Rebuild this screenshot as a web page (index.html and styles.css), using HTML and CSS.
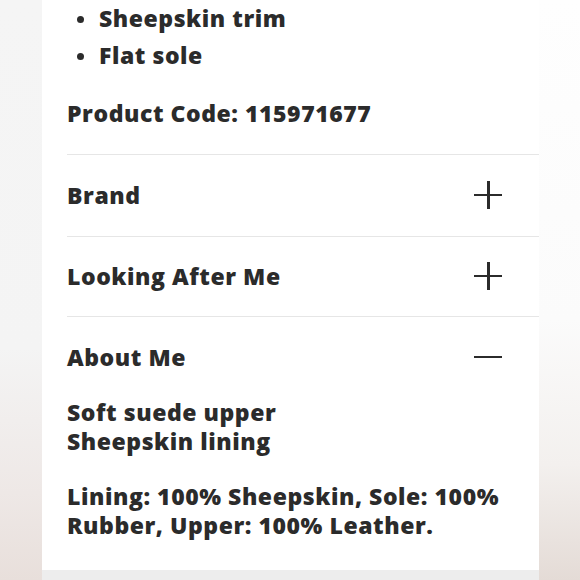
FILE: index.html
```html
<!DOCTYPE html>
<html lang="en">
<head>
<meta charset="utf-8">
<title>Product details</title>
<link rel="stylesheet" href="styles.css">
</head>
<body>
<div class="page">
  <div class="side side-left"></div>
  <main class="panel">
    <div class="content">
      <ul class="features">
        <li>Sheepskin trim</li>
        <li>Flat sole</li>
      </ul>
      <p class="code">Product Code: 115971677</p>
      <section class="acc">
        <div class="acc-head">
          <h2 class="acc-title">Brand</h2>
          <span class="icon icon-plus"></span>
        </div>
      </section>
      <section class="acc">
        <div class="acc-head">
          <h2 class="acc-title">Looking After Me</h2>
          <span class="icon icon-plus"></span>
        </div>
      </section>
      <section class="acc acc-open">
        <div class="acc-head">
          <h2 class="acc-title">About Me</h2>
          <span class="icon icon-minus"></span>
        </div>
        <div class="acc-body">
          <p>Soft suede upper<br>Sheepskin lining</p>
          <p>Lining: 100% Sheepskin, Sole: 100% Rubber, Upper: 100% Leather.</p>
        </div>
      </section>
    </div>
    <div class="footer-band"></div>
  </main>
  <div class="side side-right"></div>
</div>
</body>
</html>
```

FILE: styles.css
```css
html, body {
  margin: 0;
  padding: 0;
}
body {
  width: 580px;
  height: 580px;
  overflow: hidden;
  font-family: "Open Sans", "Lato", "Liberation Sans", sans-serif;
  font-weight: 800;
  color: #2b2b2b;
  font-size: 23px;
  letter-spacing: 0.55px;
}
.page {
  display: flex;
  height: 580px;
}
.side-left {
  width: 42px;
  flex: none;
  background: linear-gradient(to bottom, #f5f5f5 0%, #f4f4f4 60%, #eee8e6 85%, #e8dfdb 100%);
}
.side-right {
  flex: 1;
  background: linear-gradient(to bottom, #fefefe 0%, #fbfbfb 55%, #f3f0ee 80%, #e4dbd6 100%);
}
.panel {
  width: 497px;
  flex: none;
  background: #ffffff;
  display: flex;
  flex-direction: column;
}
.content {
  flex: 1;
  padding-left: 25px;
}
.features {
  list-style: none;
  margin: 0;
  padding: 0;
}
.features li {
  line-height: 37px;
  padding-left: 32px;
  position: relative;
}
.features li::before {
  content: "";
  position: absolute;
  left: 10px;
  top: 16px;
  width: 7px;
  height: 7px;
  border-radius: 50%;
  background: #2b2b2b;
}
.code {
  margin: 25px 0 26px;
  line-height: 29px;
}
.acc {
  border-top: 1px solid #e6e6e6;
}
.acc-head {
  height: 81px;
  display: flex;
  align-items: center;
  justify-content: space-between;
  padding-right: 37px;
}
.acc + .acc .acc-head {
  height: 79px;
}
.acc-open.acc .acc-head {
  height: 81px;
}
.acc-title {
  margin: 0;
  font-size: 23px;
  font-weight: 800;
  line-height: 29px;
}
.icon {
  width: 28px;
  height: 28px;
  position: relative;
  margin-top: -2px;
}
.icon::before,
.icon::after {
  content: "";
  position: absolute;
  background: #2b2b2b;
}
.icon::before {
  left: 0;
  right: 0;
  top: 13px;
  height: 2.5px;
}
.icon-plus::after {
  top: 0;
  bottom: 0;
  left: 13px;
  width: 2.5px;
}
.acc-body p {
  margin: 0 0 26px;
  line-height: 29px;
}
.footer-band {
  height: 10px;
  background: #ededed;
}
```
